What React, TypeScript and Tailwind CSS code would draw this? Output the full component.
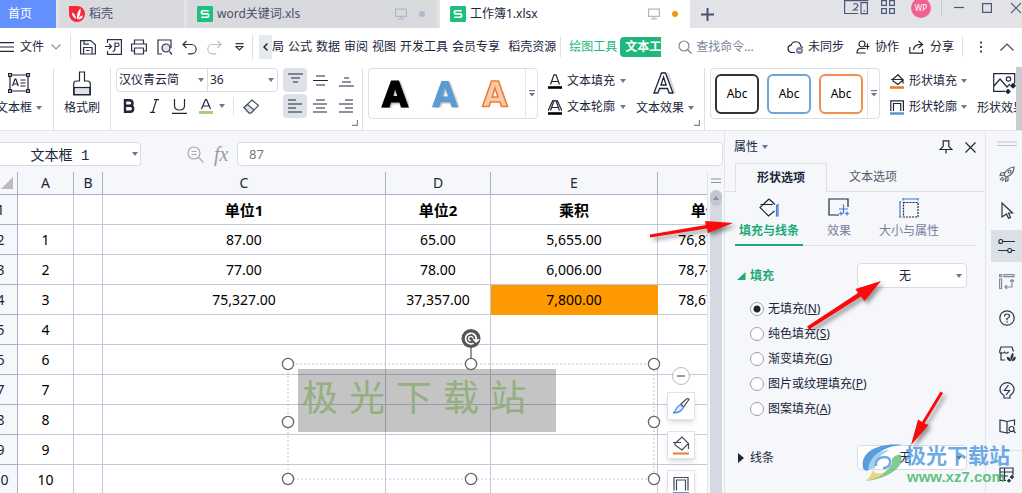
import type { ReactNode } from 'react';

type SvgProps = { w: number; h: number; className?: string; sw?: number; children: ReactNode };

function Svg({ w, h, className = '', sw = 1.2, children }: SvgProps) {
  return (
    <svg
      width={w}
      height={h}
      viewBox={`0 0 ${w} ${h}`}
      fill="none"
      stroke="currentColor"
      strokeWidth={sw}
      className={`shrink-0 ${className}`}
      aria-hidden="true"
    >
      {children}
    </svg>
  );
}

function Caret({ className = '' }: { className?: string }) {
  return (
    <Svg w={6} h={4} className={`text-[#6d7791] ${className}`}>
      <path d="M0 0h6L3 4z" fill="currentColor" stroke="none" />
    </Svg>
  );
}

function SheetLogo() {
  return (
    <Svg w={16} h={16} sw={1.6}>
      <rect width="16" height="16" rx="1" fill="#1ec07f" stroke="none" />
      <path d="M11.7 4.8H6.2Q4.4 4.8 4.4 6.4 4.4 7.9 6.2 7.9H10Q11.7 7.9 11.7 9.5 11.7 11.2 10 11.2H4.3" stroke="#fff" />
    </Svg>
  );
}

function Monitor() {
  return (
    <Svg w={12} h={12} className="text-[#b0b8cf]">
      <path d="M.6 1.1h10.8v7.3H.6zM6 8.4v2.4M3 10.9h6" />
    </Svg>
  );
}

function TitleBar() {
  return (
    <header className="flex h-7 shrink-0 gap-[3px] overflow-hidden bg-[#e2e3e7] text-[#4a5069]">
      <button className="w-14 shrink-0 bg-[#6490ff] pr-6 text-right text-white">首页</button>
      <button className="flex w-[125px] shrink-0 items-center gap-1 bg-[#d9dadd] pl-2.5">
        <Svg w={16} h={16}>
          <path d="M0 0h8a8 8 0 1 1-8 8z" fill="#f5293a" stroke="none" />
          <path d="M8 13.5C7.5 9 9 4.5 11.5 2.5 12 6 11 11 8 13.5zM7 13C4.5 12 3 9.5 3 6.5 5.5 7.5 7 10 7 13zM9 13.5C10 11 12 9.5 14 9.5 13.5 12 11.5 13.5 9 13.5z" fill="#fff" stroke="none" />
        </Svg>
        稻壳
      </button>
      <button className="flex w-[250px] shrink-0 items-center gap-1 bg-[#d9dadd] px-2.5">
        <SheetLogo />
        word关键词.xls
        <span className="mr-0.5 ml-auto flex items-center gap-3">
          <Monitor />
          <i className="size-1.5 rounded-full bg-[#b0b8cf]" />
        </span>
      </button>
      <button className="flex w-[250px] shrink-0 items-center gap-1 bg-white px-2.5 text-[#20263a]">
        <SheetLogo />
        工作簿1.xlsx
        <span className="mr-0.5 ml-auto flex items-center gap-3">
          <Monitor />
          <i className="size-1.5 rounded-full bg-[#e89a0c]" />
        </span>
      </button>
      <button className="ml-2 shrink-0" aria-label="新建">
        <Svg w={13} h={13} sw={2}>
          <path d="M6.5 0v13M0 6.5h13" />
        </Svg>
      </button>
      <div className="ml-auto flex shrink-0 items-start text-[#4c5878]">
        <button className="mr-3" aria-label="窗口">
          <Svg w={25} h={15}>
            <path d="M14 13.5H.6V0M.6 .6h23.8M17 2.6h6.4v11H17zM19.5 11h1.6" />
            <path d="M9.5 4.5q2.500-2 4 0T9.5 10h4.5" />
          </Svg>
        </button>
        <button className="mr-4" aria-label="应用">
          <Svg w={14} h={15}>
            <path d="M.6 .6h4.8v4.8H.6zM8.6 .6h4.8v4.8H8.6zM.6 8.6h4.8v4.8H.6zM8.6 8.6h4.8v4.8H8.6z" />
          </Svg>
        </button>
        <button className="-mt-0.5 size-5 rounded-full bg-[#f0618f] text-[8px] text-white">WP</button>
        <span className="ml-2.5 h-4 w-px bg-[#c5c8d0]" />
        <button className="ml-3" aria-label="最小化">
          <Svg w={10} h={15}><path d="M0 7.5h10" /></Svg>
        </button>
        <button className="ml-[18px]" aria-label="最大化">
          <Svg w={10} h={15}><path d="M.6 3.6h8.8v8.8H.6z" /></Svg>
        </button>
        <button className="mr-px ml-[19px]" aria-label="关闭">
          <Svg w={10} h={15}><path d="M0 3l10 10M10 3L0 13" /></Svg>
        </button>
      </div>
    </header>
  );
}

function Bar({ className = '' }: { className?: string }) {
  return <span className={`w-px shrink-0 bg-[#dcdfe5] ${className}`} />;
}

const MENUS = ['公式', '数据', '审阅', '视图', '开发工具', '会员专享'];

function MenuBar() {
  return (
    <nav className="flex h-[38px] shrink-0 items-center overflow-hidden bg-white whitespace-nowrap">
      <button className="flex items-center">
        <Svg w={14} h={10} className="mr-1.5"><path d="M0 .6h14M0 5h14M0 9.4h14" /></Svg>
        文件
        <Svg w={10} h={6} className="ml-[7px] text-[#8b91a0]"><path d="M.5 .5L5 5 9.5 .5" /></Svg>
      </button>
      <Bar className="mx-[9px] h-6" />
      <div className="flex items-center gap-[9px] text-[#2b3348]">
        <button aria-label="保存">
          <Svg w={16} h={16}>
            <path d="M.6 1.6h10l4.8 4.2v9.2H.6zM3.6 15V8.5h8.5V15M4 1.6v3.6h5M6 11.5h3.5" />
          </Svg>
        </button>
        <button aria-label="输出PDF">
          <Svg w={17} h={16}>
            <path d="M2.5 4V.6h13.9v14.8H2.5V12M0 7.5h6M4 5l2.5 2.5L4 10M7.5 12.5c2 0 2.5-2 2.5-4V4h2.5c2 0 2 3.5 0 3.5h-2" />
          </Svg>
        </button>
        <button aria-label="打印">
          <Svg w={16} h={16}>
            <path d="M3.5 5V1h9v4M3.5 12H.6V5h14.8v7h-2.9M3.5 9h9v6h-9z" />
          </Svg>
        </button>
        <button className="ml-px" aria-label="打印预览">
          <Svg w={16} h={16}>
            <path d="M5 15H1V1h13v8M14 3v5M12.5 12.5L15 15.5" />
            <circle cx="9" cy="9" r="4" fill="#dfe3ea" />
          </Svg>
        </button>
        <button aria-label="撤销">
          <Svg w={15} h={15}><path d="M4.5 1L1 4.5 4.5 8M1 4.5h8.5a4.6 4.6 0 0 1 0 9.300H6" /></Svg>
        </button>
        <button className="ml-px text-[#b9bcc4]" aria-label="恢复">
          <Svg w={15} h={15}><path d="M10.5 1L14 4.5 10.5 8M14 4.5H5.5a4.6 4.6 0 0 0 0 9.300H9" /></Svg>
        </button>
        <button className="ml-1" aria-label="更多">
          <Svg w={9} h={8}><path d="M.5 .6h8M1 3.5L4.5 7 8 3.5z" /></Svg>
        </button>
      </div>
      <Bar className="ml-2 h-6" />
      <button className="ml-1.5 flex h-6 w-[13px] shrink-0 items-center justify-center bg-[#e6e9ee]" aria-label="向左">
        <Svg w={5} h={8} sw={1.5}><path d="M4.5 .5L1 4l3.5 3.5" /></Svg>
      </button>
      <div className="flex shrink-0 gap-1">
        <button>局</button>
        {MENUS.map(m => <button key={m}>{m}</button>)}
        <button className="ml-1">稻壳资源</button>
      </div>
      <Bar className="mx-1 h-5" />
      <button className="ml-1 text-[#1fb87a]">绘图工具</button>
      <button className="ml-[3px] h-5 w-[41px] shrink-0 overflow-hidden rounded-l bg-[#1fb87a] pl-[5px] text-left font-bold text-white">文本工具</button>
      <label className="ml-[17px] flex min-w-0 items-center gap-1 text-[#7b8499]">
        <Svg w={14} h={14}><circle cx="6" cy="6" r="5" /><path d="M9.5 9.5L13.5 13.5" /></Svg>
        <input aria-label="查找命令" className="w-16 min-w-0 placeholder:text-[#7b8499]" placeholder="查找命令..." />
      </label>
      <div className="ml-auto flex shrink-0 items-center text-[#3f4960]">
        <button className="flex items-center gap-1 text-[#20263a]">
          <Svg w={17} h={14}>
            <path d="M8 12.5H4.5a3.7 3.7 0 0 1-.5-7.3A5 5 0 0 1 13.7 6q1.5 .5 1.8 2" />
            <circle cx="12.5" cy="10.5" r="3.5" fill="#7c86a0" stroke="none" />
            <path d="M10.8 10.5h3.4" stroke="#fff" />
          </Svg>
          未同步
        </button>
        <button className="ml-3 flex items-center gap-[5px] text-[#20263a]">
          <Svg w={14} h={14}>
            <circle cx="6" cy="4" r="3" /><path d="M9.5 8.5H4q-3 .5-3 4.5h8.5M11.5 3.5v6M8.5 6.5h5" />
          </Svg>
          协作
        </button>
        <button className="ml-2.5 flex items-center gap-1.5 text-[#20263a]">
          <Svg w={15} h={14}>
            <path d="M9.5 1L13.5 4.5 9.5 8M13 4.5Q5 4 4.5 10M.8 7v6.2h12.7V9" />
          </Svg>
          分享
        </button>
        <Bar className="ml-2 h-5" />
        <button className="ml-4" aria-label="更多">
          <Svg w={4} h={12}>
            <path d="M1 .5h2v2H1zM1 5h2v2H1zM1 9.5h2v2H1z" fill="currentColor" stroke="none" />
          </Svg>
        </button>
        <button className="mr-2 ml-[17px]" aria-label="收起">
          <Svg w={14} h={8}><path d="M.5 7.5L7 1l6.5 6.5" /></Svg>
        </button>
      </div>
    </nav>
  );
}

function AlignButton({ d, label, on }: { d: string; label: string; on?: boolean }) {
  return (
    <button aria-label={label} className={on ? 'flex h-6 w-6 items-center justify-center rounded-sm bg-[#dde2e8]' : 'flex h-6 w-6 items-center justify-center'}>
      <Svg w={15} h={14}><path d={d} /></Svg>
    </button>
  );
}

function CornerMark() {
  return (
    <Svg w={6} h={6} className="mb-1 self-end text-[#7d869b]"><path d="M5.4 0v5.4H0" /></Svg>
  );
}

function MoreStyles() {
  return (
    <button className="flex h-full w-3 shrink-0 items-center justify-center border-l border-[#e4e6ea] text-[#6d7791]" aria-label="更多样式">
      <Svg w={6} h={7}><path d="M0 .6h6" /><path d="M0 3h6L3 6.5z" fill="currentColor" stroke="none" /></Svg>
    </button>
  );
}

function LetterA({ size, children }: { size: 'sm' | 'lg'; children?: ReactNode }) {
  return size === 'sm' ? (
    <Svg w={14} h={15}>
      <path d="M2.5 10.5L6 .8h2l3.5 9.7M4 7.5h6" />
      {children}
      <path d="M0 13.5h14" stroke="#000" strokeWidth="2.6" />
    </Svg>
  ) : (
    <Svg w={24} h={22} sw={1.3}>
      <path d="M13 1h3l7 20h-4z" fill="#d9dbe0" stroke="none" />
      <path d="M1 21L8.5 1h4L20 21h-4l-1.5-4.5h-8L5 21zM8 13h5.2L10.5 5z" />
    </Svg>
  );
}

function Ribbon() {
  return (
    <div className="flex h-16 shrink-0 overflow-hidden bg-white pt-0.5 whitespace-nowrap text-[#20263a]">
      <button className="-ml-1 flex w-[57px] shrink-0 flex-col pt-[5px]">
        <Svg w={22} h={22} className="ml-3">
          <path d="M2 2h18v16H2z" />
          <path d="M.6 .6h2.8v2.8H.6zM18.6 .6h2.8v2.8h-2.8zM.6 16.6h2.8v2.8H.6zM18.6 16.6h2.8v2.8h-2.8z" fill="#fff" />
          <path d="M4.5 13L7 6h.8l2.5 7M5.5 11h4M12.5 7h5M12.5 10h5M12.5 13h5" />
        </Svg>
        <span className="mt-[5px] flex items-center gap-1">文本框 <Caret /></span>
      </button>
      <Bar className="h-full" />
      <button className="flex w-14 shrink-0 flex-col items-center pt-[3px]">
        <Svg w={18} h={25}>
          <path d="M6.5 10V1h5v9h3q2.8 0 2.8 3v11H.7V13q0-3 2.8-3z" />
          <path d="M1.2 16.5h15.6v7H1.2z" fill="#dfe2e8" /><path d="M.7 16.5h16.6" />
        </Svg>
        <span className="mt-1">格式刷</span>
      </button>
      <Bar className="h-full" />

      <div className="ml-[5px] w-[162px] shrink-0">
        <div className="flex h-6 rounded-sm border border-[#dcdfe4]">
          <label className="relative w-[91px] border-r border-[#dcdfe4]">
            <select aria-label="字体" className="h-full w-full appearance-none pl-0.5"><option>汉仪青云简</option></select>
            <Caret className="pointer-events-none absolute top-[9px] right-[3px]" />
          </label>
          <label className="relative flex-1">
            <select aria-label="字号" className="h-full w-full appearance-none pl-0.5"><option>36</option></select>
            <Caret className="pointer-events-none absolute top-[9px] right-[3px]" />
          </label>
        </div>
        <div className="flex h-7 items-center pl-[7px]">
          <button aria-label="加粗">
            <Svg w={12} h={14} sw={2.4}><path d="M2 1.3h4.5q3 0 3 2.7t-3 2.7H2zM2 6.7h5.2q3 0 3 3t-3 3H2z" /></Svg>
          </button>
          <button className="ml-[15px]" aria-label="倾斜">
            <Svg w={9} h={14}><path d="M4 .6h5M0 13.4h5M6.5 .6l-4 12.8" /></Svg>
          </button>
          <button className="ml-[13px]" aria-label="下划线">
            <Svg w={15} h={15}><path d="M2.5 0v6.5q0 4.5 5 4.5t5-4.500V0M0 14.3h15" /></Svg>
          </button>
          <button className="ml-3 flex items-center gap-1.5" aria-label="字体颜色">
            <Svg w={14} h={15}>
              <path d="M2.5 10L6.5 .5h1L11.5 10M4 7h6" /><path d="M0 13.5h14" stroke="#a5cc82" strokeWidth="3" />
            </Svg>
            <Caret />
          </button>
          <Bar className="ml-2 h-[18px]" />
          <button className="ml-[9px] text-[#4a5164]" aria-label="清除">
            <Svg w={17} h={15}>
              <path d="M1 8.5L9 1l6.5 5.5-7.5 7.5H6z" /><path d="M4.5 5.5l6.5 5.5L8 14H6L1 8.5z" fill="#dfe2e8" />
            </Svg>
          </button>
        </div>
      </div>

      <div className="ml-[5px] grid w-[75px] shrink-0 grid-cols-3 content-start gap-x-0.5 gap-y-0.5">
        <AlignButton on label="顶端对齐" d="M0 1h15M3 5h9M5 9h5" />
        <AlignButton label="垂直居中" d="M3 3h9M0 7.5h15M3 12h9" />
        <AlignButton label="底端对齐" d="M5 5h5M3 9h9M0 13h15" />
        <AlignButton on label="左对齐" d="M0 1h8M0 5h14M0 9h8M0 13h14" />
        <AlignButton label="居中" d="M3 1h9M0 5h14M3 9h9M0 13h14" />
        <AlignButton label="右对齐" d="M6 1h8M0 5h14M6 9h8M0 13h14" />
      </div>
      <div className="-ml-1.5 flex"><CornerMark /></div>
      <Bar className="ml-1 h-full" />

      <div className="ml-[5px] flex h-[51px] w-[170px] shrink-0 rounded-sm border border-[#dcdfe4]">
        <div className="flex flex-1 items-center justify-between pr-4 pl-3">
          <button aria-label="黑色样式">
            <Svg w={28} h={28}>
              <path d="M1 27L10.5 1h7L27 27h-6.500L19 22H9.5L8 27zM11.5 16.5h5.6L14 7z" fill="#000" fillRule="evenodd" stroke="#000" className="drop-shadow-[1px_1px_1px_#999]" />
            </Svg>
          </button>
          <button aria-label="蓝色样式">
            <Svg w={28} h={28}>
              <path d="M1 27L10.5 1h7L27 27h-6.500L19 22H9.5L8 27zM11.5 16.5h5.6L14 7z" fill="#5b9bd5" fillRule="evenodd" stroke="none" className="drop-shadow-[1px_1px_1px_#999]" />
            </Svg>
          </button>
          <button aria-label="橙色样式">
            <Svg w={28} h={28} sw={1.6}>
              <path d="M1.5 26.5L10.5 1h7l9 25.5h-6L19 22H9.5L8 26.5zM11.2 17h5.8L14 8z" fill="#f7cbac" fillRule="evenodd" stroke="#ed7d31" />
            </Svg>
          </button>
        </div>
        <MoreStyles />
      </div>
      <div className="ml-[10px] flex shrink-0 flex-col">
        <button className="flex h-[26px] items-center gap-[5px]"><LetterA size="sm" />文本填充<Caret /></button>
        <button className="flex h-[26px] items-center gap-[5px]">
          <LetterA size="sm"><path d="M0 11L5 0h4l5 11" /></LetterA>文本轮廓<Caret />
        </button>
      </div>
      <button className="ml-2.5 flex shrink-0 flex-col items-center pt-1">
        <LetterA size="lg" />
        <span className="mt-1.5 flex items-center gap-1">文本效果<Caret /></span>
      </button>
      <CornerMark />
      <Bar className="ml-1 h-full" />

      <div className="ml-[5px] flex h-[51px] w-[170px] shrink-0 rounded-sm border border-[#dcdfe4]">
        <div className="flex flex-1 items-center gap-2 pl-1 text-black">
          <button className="h-10 w-11 shrink-0 rounded-md border-2 border-[#333]">Abc</button>
          <button className="h-10 w-11 shrink-0 rounded-md border-2 border-[#6ea5da]">Abc</button>
          <button className="h-10 w-11 shrink-0 rounded-md border-2 border-[#f0904f]">Abc</button>
        </div>
        <MoreStyles />
      </div>
      <div className="ml-[10px] flex shrink-0 flex-col">
        <button className="flex h-[26px] items-center gap-1">
          <Svg w={15} h={15}>
            <path d="M3 5L8 .8 13 6 8 10.5 3 7zM1 5.5h12v4" /><path d="M0 13.5h14" stroke="#ed7d31" strokeWidth="2.6" />
          </Svg>
          形状填充<Caret />
        </button>
        <button className="flex h-[26px] items-center gap-1">
          <Svg w={15} h={15}>
            <path d="M.8 11V.8h12.6V11M3.5 11V3.5h7.2V11" /><path d="M0 13.5h14" stroke="#5b9bd5" strokeWidth="2.6" />
          </Svg>
          形状轮廓<Caret />
        </button>
      </div>
      <button className="ml-2.5 flex w-10 min-w-0 flex-col overflow-hidden pt-[5px]">
        <Svg w={23} h={21} className="ml-4">
          <path d="M12 18.4H.7V.7h21v10M1 13l6-7 7 8 3-3" />
          <circle cx="15.5" cy="6" r="2.2" />
          <path d="M15 16.5l2 2-2 2-2-2zM20 10.5l2.3 2.3L20 15l-2.300-2.200z" fill="currentColor" />
        </Svg>
        <span className="mt-1.5">形状效果</span>
      </button>
      <div className="-mt-px ml-auto w-1.5 shrink-0 bg-[#c9cbd1]" />
    </div>
  );
}

const COLS = ['A', 'B', 'C', 'D', 'E', ''];
const ROWS = [
  ['', '', '单位1', '单位2', '乘积', '单位3'],
  ['1', '', '87.00', '65.00', '5,655.00', '76,870.00'],
  ['2', '', '77.00', '78.00', '6,006.00', '78,740.00'],
  ['3', '', '75,327.00', '37,357.00', '7,800.00', '78,670.00'],
  ['4', '', '', '', '', ''],
  ['6', '', '', '', '', ''],
  ['7', '', '', '', '', ''],
  ['8', '', '', '', '', ''],
  ['9', '', '', '', '', ''],
  ['10', '', '', '', '', ''],
];

function cellClass(r: number, c: number) {
  if (r === 0) return 'border-r border-b border-[#c3c8da] text-[15px] font-bold';
  if (r === 3 && c === 4) return 'border-r border-b border-[#ff9900] bg-[#ff9900]';
  return 'border-r border-b border-[#c3c8da]';
}

function Grid() {
  return (
    <table className="-ml-4 w-[779px] table-fixed border-separate border-spacing-0 bg-white text-center text-sm leading-5 text-black">
      <colgroup>
        <col className="w-[34px]" />
        <col className="w-14" />
        <col className="w-[29px]" />
        <col className="w-[283px]" />
        <col className="w-[105px]" />
        <col className="w-[167px]" />
        <col className="w-[105px]" />
      </colgroup>
      <thead className="bg-[#f5f7fa] text-[#20263a]">
        <tr className="h-[23px]">
          <th className="border-r border-b border-[#a9b0c8] p-0">
            <Svg w={12} h={12} className="ml-[17px]"><path d="M12 0v12H0z" fill="#b9bbc1" stroke="none" /></Svg>
          </th>
          {COLS.map((c, i) => <th key={i} className="border-r border-b border-[#a9b0c8] p-0 font-normal">{c}</th>)}
        </tr>
      </thead>
      <tbody>
        {ROWS.map((row, r) => (
          <tr key={r} className="h-[30px]">
            <th className="border-r border-b border-[#a9b0c8] bg-[#f5f7fa] p-0 font-normal text-[#20263a]">{r + 1}</th>
            {row.map((v, c) => <td key={c} className={`p-0 ${cellClass(r, c)}`}>{v}</td>)}
          </tr>
        ))}
      </tbody>
    </table>
  );
}

const HANDLES = [[7, 33], [190, 33], [373, 33], [7, 91], [373, 91], [7, 148], [190, 148], [373, 148]];

function SelectedShape() {
  return (
    <div className="absolute top-[159px] left-[281px]">
      <div className="absolute top-[38px] left-[17px] flex h-[63px] w-[258px] gap-[11px] bg-black/23 pl-1 font-[Noto_Sans_CJK_SC] text-[36px] leading-[52px] text-[#93b07e]">
        {[...'极光下载站'].map(ch => <span key={ch}>{ch}</span>)}
      </div>
      <svg width="380" height="156" viewBox="0 0 380 156" fill="none" className="relative">
        <path d="M7 33h366v115H7z" stroke="#c4c4c8" strokeDasharray="2 2" />
        <path d="M190 16v12" stroke="#333" />
        {HANDLES.map(([x, y]) => <circle key={`${x}-${y}`} cx={x} cy={y} r="5.6" fill="#fff" stroke="#666" strokeWidth="1.3" />)}
      </svg>
      <svg width="20" height="20" viewBox="0 0 20 20" fill="none" className="absolute -top-0.5 left-[180px]">
        <circle cx="10" cy="9.5" r="9.5" fill="#555" />
        <path d="M12.5 14.2A5.3 5.300 0 1 1 15.2 9.5v2M12.3 10.2l2.9 2.6 2.8-2.6" stroke="#fff" strokeWidth="1.7" />
        <path d="M12 9.500A2.200 2.200 0 1 0 10 11.700" stroke="#fff" strokeWidth="1.3" />
      </svg>
    </div>
  );
}

function FloatTools() {
  const box = 'flex size-7 items-center justify-center border border-[#dfe2e8] bg-white text-[#444b5c] shadow-md';
  return (
    <div className="absolute top-[195px] left-[667px] flex flex-col items-center gap-[11px]">
      <button className="-mb-1 flex size-[18px] items-center justify-center rounded-full border border-[#bbb] bg-white" aria-label="收起">
        <i className="h-0.5 w-2 bg-[#999]" />
      </button>
      <button className={box} aria-label="格式刷">
        <Svg w={18} h={18}>
          <path d="M9 7l5.500-5q2-1 2.5 .5L11.5 10z" />
          <path d="M8.5 7.5l3 3-2 2.5q-3 3-8.500 3 2.500-1 3-4 1-2.500 4.500-4.500z" fill="#dcebfb" stroke="#4b86dc" />
        </Svg>
      </button>
      <button className={box} aria-label="填充">
        <Svg w={18} h={19}>
          <path d="M3 7.5L10 1l6.5 6.5L10 14 3 9zM1 6.5h8M16.5 8v5" /><path d="M1 17.5h16" stroke="#ed7d31" strokeWidth="2" />
        </Svg>
      </button>
      <button className={box} aria-label="轮廓">
        <Svg w={18} h={19}>
          <path d="M2 15.5V2.5h14v13M4.5 15.5V5h9v10.5" /><path d="M1 18h16" stroke="#5b9bd5" strokeWidth="2" />
        </Svg>
      </button>
    </div>
  );
}

function SheetArea() {
  return (
    <main className="flex min-w-0 flex-1 flex-col bg-[#f5f7fa]">
      <div className="flex h-[41px] shrink-0 items-start pt-[11px] pr-px">
        <label className="relative w-[141px] shrink-0">
          <input
            aria-label="名称框"
            defaultValue="文本框 1"
            className="h-6 w-full rounded-r-sm border border-l-0 border-[#dadce3] bg-white pr-5 text-center font-[Liberation_Mono,Noto_Sans_CJK_SC,monospace] text-sm text-[#20263a]"
          />
          <Caret className="pointer-events-none absolute top-2.5 right-[3px]" />
        </label>
        <Svg w={17} h={17} className="mt-1 ml-[46px] text-[#a9abb2]">
          <circle cx="7" cy="7" r="6" /><path d="M4.5 5.5h5M4.5 8.5h5M11.5 11.5l5 5" />
        </Svg>
        <span className="ml-2.5 w-[18px] font-[Liberation_Serif,serif] text-xl leading-6 text-[#9a9ca4] italic">fx</span>
        <input
          aria-label="编辑栏"
          defaultValue="87"
          className="ml-[5px] h-6 min-w-0 flex-1 rounded-sm border border-[#dadce3] bg-white px-[11px] text-[13px] text-[#777b85]"
        />
      </div>
      <div className="flex min-h-0 flex-1">
        <div className="relative min-w-0 flex-1">
          <div className="h-full overflow-hidden">
            <Grid />
          </div>
          <SelectedShape />
          <FloatTools />
        </div>
        <div className="flex w-[17px] shrink-0 flex-col items-center border-l border-[#e0e2e8]">
          <Svg w={10} h={6} className="my-1.5 text-[#8891a8]"><path d="M0 1h10M0 4.5h10" /></Svg>
          <div className="w-3 flex-1 rounded-t-md bg-[#d6d9e1]">
            <button className="flex h-4 w-3 items-center justify-center rounded-md bg-[#c4c6d2]" aria-label="向上滚动">
              <Svg w={6} h={4}><path d="M0 4h6L3 0z" fill="#8a90a5" stroke="none" /></Svg>
            </button>
          </div>
        </div>
      </div>
    </main>
  );
}

function NoneSelect({ label }: { label: string }) {
  return (
    <label className="relative ml-auto">
      <select
        aria-label={label}
        className="h-[25px] w-[110px] appearance-none rounded-sm border border-[#d9dce2] bg-white pr-3.5 text-center text-[#20263a]"
      >
        <option>无</option>
      </select>
      <Caret className="pointer-events-none absolute top-[11px] right-[5px]" />
    </label>
  );
}

const FILLS = [
  ['无填充', 'N'],
  ['纯色填充', 'S'],
  ['渐变填充', 'G'],
  ['图片或纹理填充', 'P'],
  ['图案填充', 'A'],
];

function PropertiesPanel() {
  return (
    <aside className="w-[261px] shrink-0 overflow-hidden border-l border-[#e2e4e9] bg-[#f5f7fa] text-[#20263a]">
      <div className="flex h-8 items-center pr-[9px] pl-[9px]">
        <button className="flex items-center gap-1">属性<Caret /></button>
        <button className="ml-auto" aria-label="固定">
          <Svg w={14} h={14}><path d="M3.500 .8h7M4.200 .8v5.500L1 9.500h12L9.800 6.300V.8M7 9.500V13.500" /></Svg>
        </button>
        <button className="ml-3" aria-label="关闭">
          <Svg w={11} h={11}><path d="M.5 .5l10 10M10.5 .5l-10 10" /></Svg>
        </button>
      </div>
      <div className="flex h-[29px]">
        <span className="w-2.5 border-b border-[#dfe1e6]" />
        <button className="w-[92px] border border-b-0 border-[#dfe1e6] font-bold">形状选项</button>
        <button className="flex-1 border-b border-[#dfe1e6] pr-[66px] text-[#555b6b]">文本选项</button>
      </div>
      <div className="mr-2.5 ml-2.5 flex h-[54px] border-b border-[#dfe1e6] text-[#76809a]">
        <button className="-mb-px flex w-[68px] flex-col items-center border-b-2 border-[#1dab75] pt-1.5 font-bold text-[#1dab75]">
          <Svg w={20} h={20} className="text-[#20263a]">
            <path d="M10 1L1 9.5l8.5 8.5 6-5M10 1l6 5.5M1.5 6.5h12.5" />
            <path d="M17.5 18V7.5l1.500-1V18z" stroke="#3f7bd6" />
          </Svg>
          <span className="mt-[5px] whitespace-nowrap">填充与线条</span>
        </button>
        <button className="ml-4 flex w-10 flex-col items-center pt-1.5">
          <Svg w={22} h={20}>
            <path d="M11 17H1V1h19v8" stroke="#20263a" />
            <path d="M15.5 6.5v9M11 11h9M13 13.5v4M11 15.5h4M19 13.5v4M17 15.5h4" stroke="#3f7bd6" />
          </Svg>
          <span className="mt-[5px]">效果</span>
        </button>
        <button className="ml-4 flex w-[68px] flex-col items-center pt-1.5">
          <Svg w={20} h={20}>
            <path d="M4.5 4.5h14.5v14.5H4.5z" stroke="#20263a" strokeDasharray="2 1" />
            <path d="M4 1h15M4 0v2.5M19 0v2.5M1 4v15M0 4h2.5M0 19h2.5" stroke="#3f7bd6" />
          </Svg>
          <span className="mt-[5px] whitespace-nowrap">大小与属性</span>
        </button>
      </div>

      <div className="mt-[17px] flex items-center pr-[18px] pl-3">
        <Svg w={9} h={8}><path d="M8.5 0v8H0z" fill="#1dab75" stroke="none" /></Svg>
        <span className="ml-1 font-bold text-[#1dab75]">填充</span>
        <NoneSelect label="填充" />
      </div>
      <div className="mt-2 pl-[25px]">
        {FILLS.map(([name, key], i) => (
          <label key={key} className="flex h-[25px] items-center gap-1">
            <input
              type="radio"
              name="fill"
              defaultChecked={i === 0}
              className="size-3.5 appearance-none rounded-full border border-[#9ba1ad] bg-white checked:bg-[radial-gradient(circle,#1c2233_3px,#fff_4px)]"
            />
            <span>{name}(<u>{key}</u>)</span>
          </label>
        ))}
      </div>
      <div className="mt-6 flex items-center pr-[18px] pl-3">
        <Svg w={6} h={10} className="ml-px"><path d="M0 0v10l6-5z" fill="#20263a" stroke="none" /></Svg>
        <span className="ml-1.5">线条</span>
        <NoneSelect label="线条" />
      </div>
    </aside>
  );
}

const SIDE = 'flex h-9 w-full shrink-0 items-center justify-center pl-1.5';

function SideRail() {
  return (
    <div className="flex w-[37px] shrink-0 flex-col overflow-hidden border-l border-[#e2e4e9] bg-[#f5f7fa] text-[#2b3348]">
      <div className="flex h-[25px] shrink-0 justify-center pt-2.5 pl-1.5">
        <Svg w={20} h={6} className="text-[#bfc3cc]"><path d="M0 1h20M0 4.5h20" /></Svg>
      </div>
      <button className={SIDE} aria-label="推荐">
        <Svg w={16} h={16} className="text-[#5b6478]">
          <path d="M5 9Q7 2 15 1q0 8-8 10zM5.5 6.5L2 7l-1 2.5 4-.5M9 11v3.5l-2.500 1L7 11M4 11l-3 3M5.5 12.5L3 15" />
          <circle cx="10.5" cy="5.5" r="1.5" />
        </Svg>
      </button>
      <button className={SIDE} aria-label="选择">
        <Svg w={14} h={17}><path d="M2 1l10.5 10H8.5l2 4.5-2 .8L6.5 12 2 15z" /></Svg>
      </button>
      <button className="mt-0.5 ml-[5px] flex h-8 shrink-0 items-center justify-center bg-[#dbdfe6]" aria-label="属性">
        <Svg w={17} h={14}>
          <path d="M5 2.5h12M0 11.5h9.5M14 11.5h3" /><circle cx="2.8" cy="2.5" r="2" /><circle cx="11.7" cy="11.5" r="2" />
        </Svg>
      </button>
      <button className={`${SIDE} mt-0.5`} aria-label="布局">
        <Svg w={16} h={16} className="text-[#858b9b]">
          <path d="M.6 .6h2v2h-2zM5 .6h10v2H5zM.6 5h2v9.5h-2zM13 5.5v7.5H6M11 7.5l2-2 2 2M8 11l-2 2 2 2" />
        </Svg>
      </button>
      <button className={SIDE} aria-label="帮助">
        <Svg w={16} h={16}>
          <circle cx="8" cy="8" r="7.2" /><path d="M5.5 6.5Q5.5 4 8 4t2.5 2.2Q10.5 7.5 8 8.5v1.7M8 11.3v1.5" />
        </Svg>
      </button>
      <button className={SIDE} aria-label="稻壳">
        <Svg w={17} h={16}>
          <path d="M6 14H2V8Q0 7 1 4l1-3h11l1.5 4.5M2 6q1.5 2.5 3.5 0 1.5 2.5 4 0" />
          <path d="M8 11q3 0 4 4-4 0-4-4zM12 14q-1-5 2-7 1 4-2 7zM13 15q1-4 3.500-4 0 4-3.500 4z" fill="currentColor" strokeWidth=".6" />
        </Svg>
      </button>
      <button className={SIDE} aria-label="创意">
        <Svg w={16} h={17}>
          <path d="M5 13.5Q1 11 1 7.5a7 6.8 0 0 1 14 0q0 3.5-4 6v2.5H5zM9.5 3L5.5 8.5h5L7 13" />
        </Svg>
      </button>
      <button className={SIDE} aria-label="阅读">
        <Svg w={17} h={15}>
          <path d="M8 14L1 12.5V1l7 1.5zM8 2.5L15.5 1v5.5" /><circle cx="12.5" cy="10" r="2.5" /><path d="M14.5 12l2 2M8 14l3-.5" />
        </Svg>
      </button>
      <span className="mt-1.5 h-px shrink-0 bg-[#dfe1e6]" />
      <button className={`${SIDE} mt-1.5`} aria-label="表格">
        <Svg w={17} h={16}>
          <path d="M7 13.5H1V1h13v7M1 5h13M1 9h8M5.5 1v12.5" />
          <path d="M13 8.5l1.5 1.5L13 11.5 11.5 10zM10 12.5l1.3 1.3L10 15l-1.300-1.200z" fill="currentColor" />
        </Svg>
      </button>
    </div>
  );
}

// red pointer arrows and the site stamp, pinned over the right part of the window
function Annotations() {
  return (
    <div className="pointer-events-none absolute top-0 right-0">
      <svg width="380" height="493" viewBox="642 0 380 493" fill="#fa0a0a" className="drop-shadow-[3px_3px_2px_rgba(0,0,0,0.4)]">
        <path d="M650 234.5L706 225l-1-4 28 2-25 10-1-4.500-57 9z" />
        <path d="M807 326.5L858 293l-2.500-4 25.5-8-16.500 20-3.500-4.500L809 329.5z" />
        <path d="M940.5 391.5L922 422l-4-2.500-7 25.5 17.5-20-4-1.500L943 393z" />
      </svg>
      <svg width="44" height="42" viewBox="0 0 44 42" fill="none" className="absolute top-[442px] right-[117px] opacity-80">
        <path d="M2 26C-1 12 14 0 42 3 24 4 10 12 8 28q-4 2-6-2z" fill="#2f86d6" />
        <path d="M7 28C8 16 17 8 29 8 20 12 14 18 14 26z" fill="#8cc4f0" />
        <path d="M40 13C44 25 28 36 5 39 22 33 32 27 31 17q4-5 9-4z" fill="#62bd75" />
        <path d="M12 28q3 6 12 2-4 6-20 9 6-4 8-11z" fill="#e8cf60" />
        <path d="M15 24q-1-8 8-9 7 0 6 6-1 5-7 5" stroke="#4b97dd" strokeWidth="2.5" />
      </svg>
      <div className="absolute top-[441px] right-0 w-[117px] whitespace-nowrap">
        <p className="text-[21px] leading-7 font-bold text-[#3b8fdd]/75">极光下载站</p>
        <p className="pl-0.5 font-[Liberation_Sans,sans-serif] text-[15px] leading-4 font-bold text-[#45b86a]/85">www.xz7.com</p>
      </div>
    </div>
  );
}

export default function App() {
  return (
    <div className="relative flex h-screen flex-col overflow-hidden bg-[#f5f7fa] font-[Noto_Sans,Noto_Sans_CJK_SC,sans-serif] text-xs text-[#20263a]">
      <TitleBar />
      <MenuBar />
      <Ribbon />
      <div className="flex min-h-0 flex-1 border-t border-[#e3e5e9]">
        <SheetArea />
        <PropertiesPanel />
        <SideRail />
      </div>
      <Annotations />
    </div>
  );
}
